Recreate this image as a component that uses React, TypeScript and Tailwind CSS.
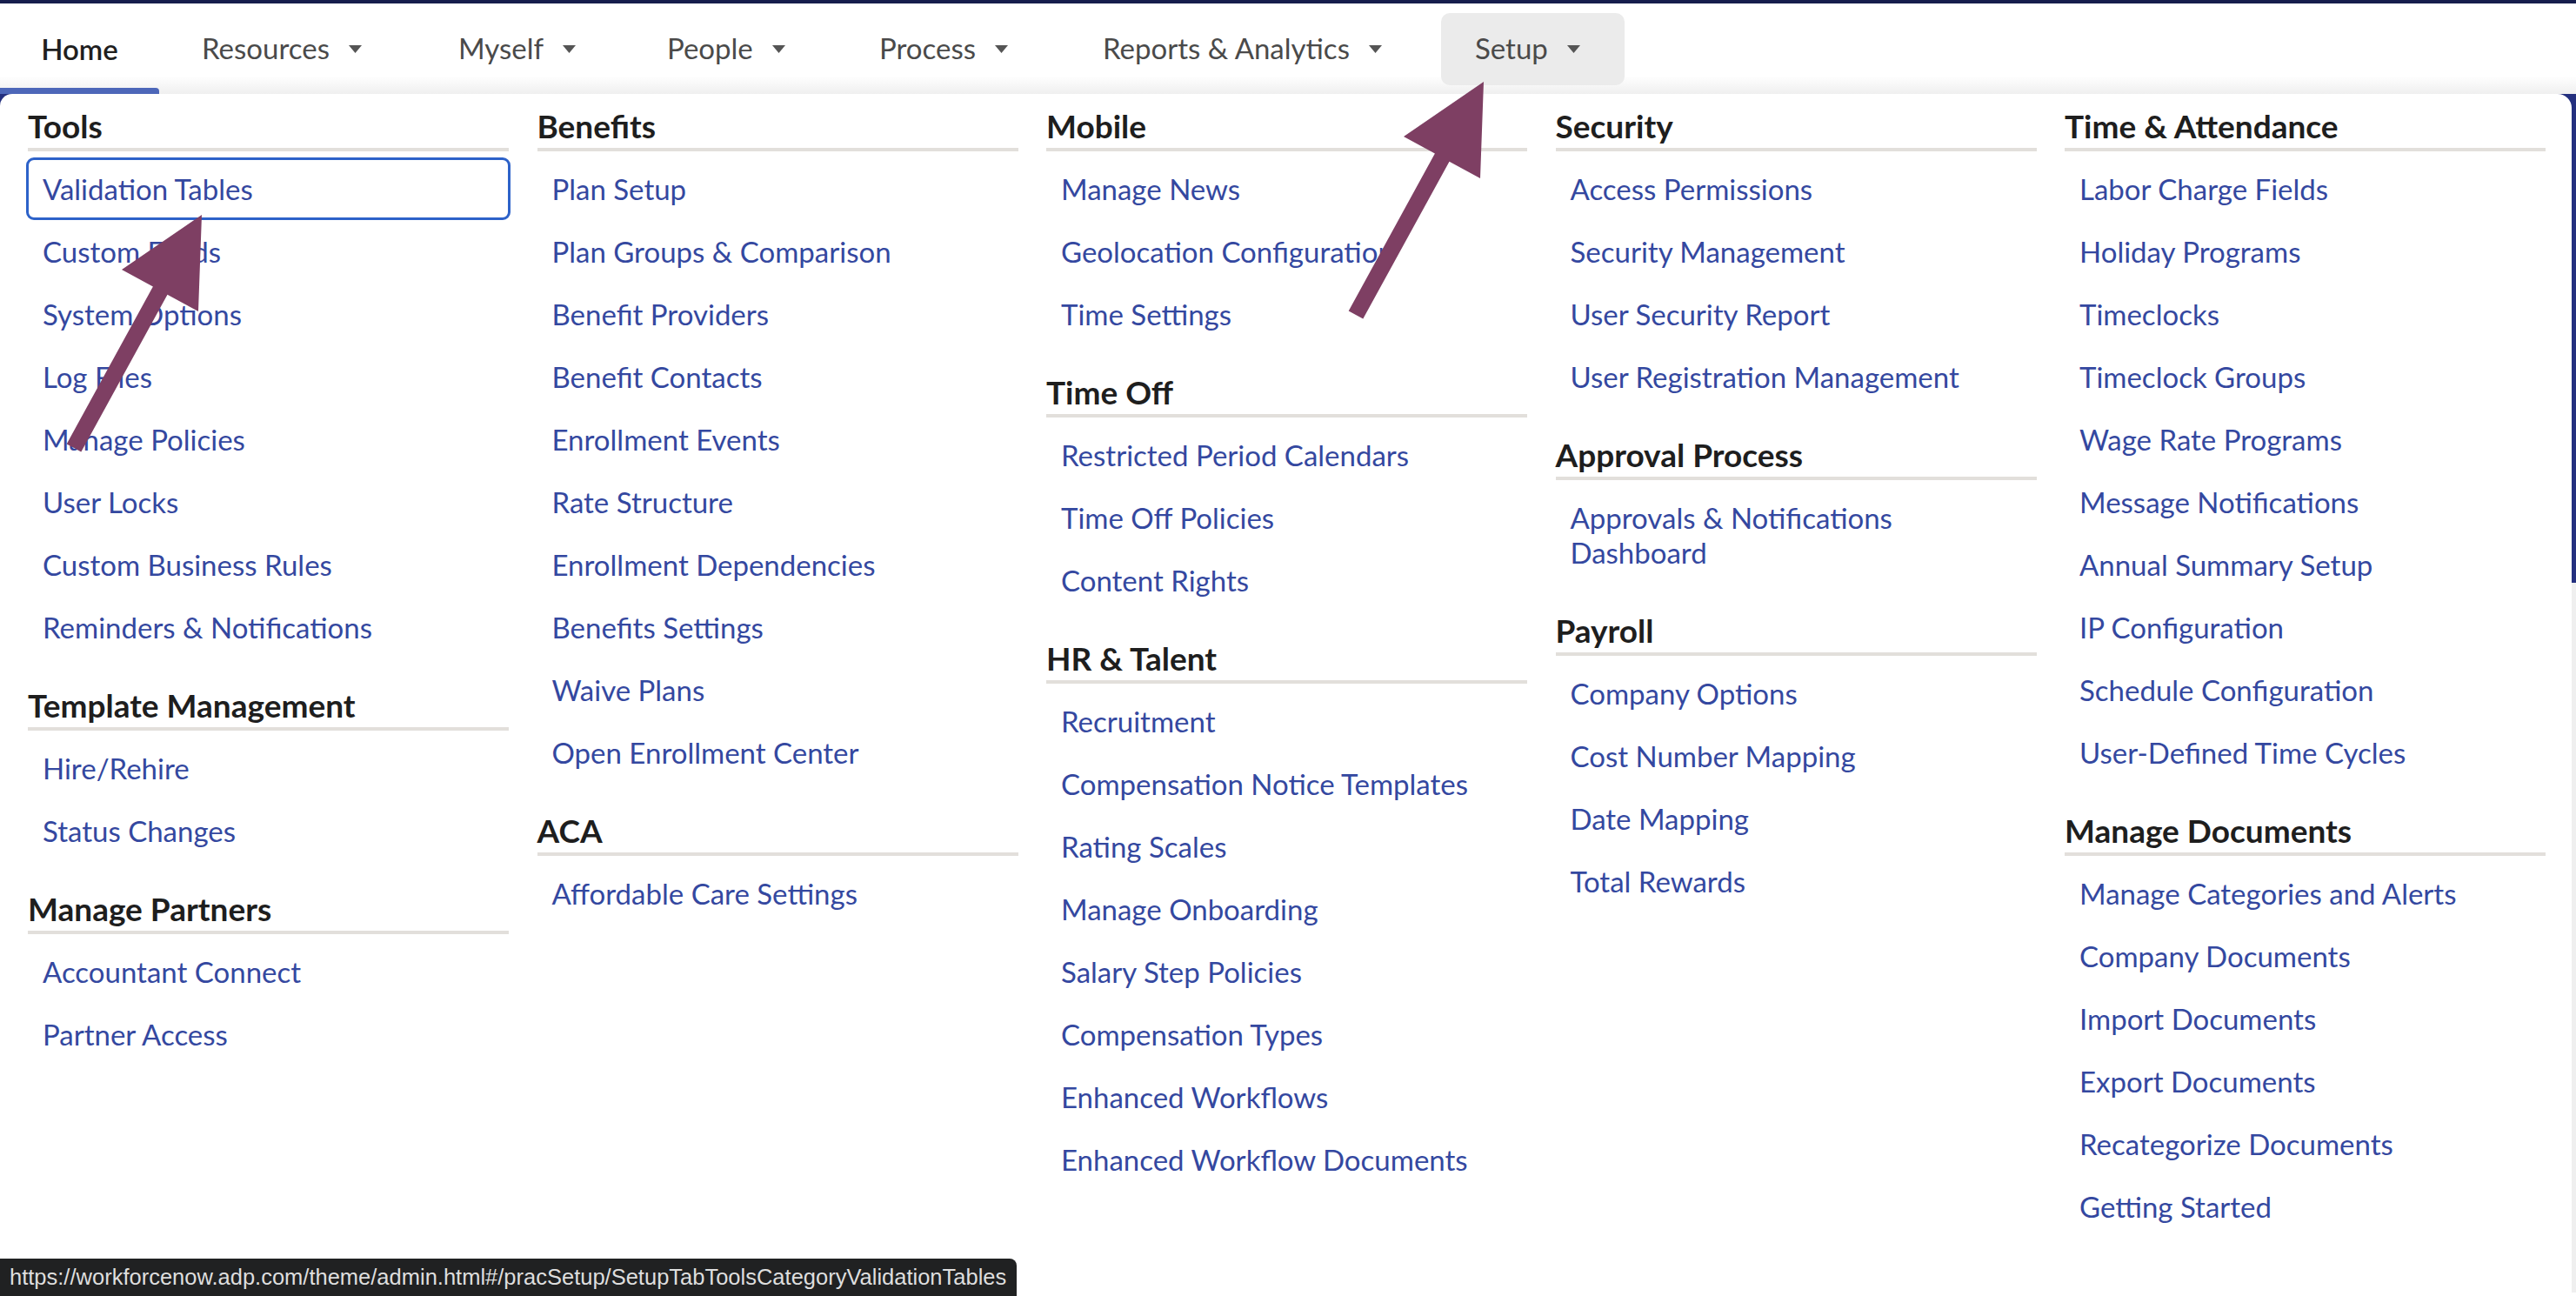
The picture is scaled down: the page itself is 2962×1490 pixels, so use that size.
import React from 'react';

type Section = { title: string; links: string[] };

const columns: Section[][] = [
  [
    {
      title: 'Tools',
      links: [
        'Validation Tables',
        'Custom Fields',
        'System Options',
        'Log Files',
        'Manage Policies',
        'User Locks',
        'Custom Business Rules',
        'Reminders & Notifications',
      ],
    },
    { title: 'Template Management', links: ['Hire/Rehire', 'Status Changes'] },
    { title: 'Manage Partners', links: ['Accountant Connect', 'Partner Access'] },
  ],
  [
    {
      title: 'Benefits',
      links: [
        'Plan Setup',
        'Plan Groups & Comparison',
        'Benefit Providers',
        'Benefit Contacts',
        'Enrollment Events',
        'Rate Structure',
        'Enrollment Dependencies',
        'Benefits Settings',
        'Waive Plans',
        'Open Enrollment Center',
      ],
    },
    { title: 'ACA', links: ['Affordable Care Settings'] },
  ],
  [
    { title: 'Mobile', links: ['Manage News', 'Geolocation Configuration', 'Time Settings'] },
    { title: 'Time Off', links: ['Restricted Period Calendars', 'Time Off Policies', 'Content Rights'] },
    {
      title: 'HR & Talent',
      links: [
        'Recruitment',
        'Compensation Notice Templates',
        'Rating Scales',
        'Manage Onboarding',
        'Salary Step Policies',
        'Compensation Types',
        'Enhanced Workflows',
        'Enhanced Workflow Documents',
      ],
    },
  ],
  [
    {
      title: 'Security',
      links: ['Access Permissions', 'Security Management', 'User Security Report', 'User Registration Management'],
    },
    { title: 'Approval Process', links: ['Approvals & Notifications\nDashboard'] },
    { title: 'Payroll', links: ['Company Options', 'Cost Number Mapping', 'Date Mapping', 'Total Rewards'] },
  ],
  [
    {
      title: 'Time & Attendance',
      links: [
        'Labor Charge Fields',
        'Holiday Programs',
        'Timeclocks',
        'Timeclock Groups',
        'Wage Rate Programs',
        'Message Notifications',
        'Annual Summary Setup',
        'IP Configuration',
        'Schedule Configuration',
        'User-Defined Time Cycles',
      ],
    },
    {
      title: 'Manage Documents',
      links: [
        'Manage Categories and Alerts',
        'Company Documents',
        'Import Documents',
        'Export Documents',
        'Recategorize Documents',
        'Getting Started',
      ],
    },
  ],
];

const tabs = [
  { label: 'Resources', className: 'ml-[10px] w-[295px]' },
  { label: 'Myself', className: 'w-[240px]' },
  { label: 'People', className: 'w-[244px]' },
  { label: 'Process', className: 'w-[257px]' },
  { label: 'Reports & Analytics', className: 'w-[428px]' },
];

function Caret() {
  return (
    <svg width="15" height="9" viewBox="0 0 15 9" className="ml-[22px] shrink-0">
      <path d="M0 0 L15 0 L7.5 9 Z" fill="#555555" />
    </svg>
  );
}

// same arrow shape, drawn twice
const arrowPoints =
  '76.7,510.4 175.9,329.6 140,310 232,247 228,358 192.5,338.7 93.3,519.6';

export default function App() {
  return (
    <div className="relative h-[1490px] w-[2962px] overflow-hidden bg-white font-['Lato','Liberation_Sans',sans-serif]">
      <div className="h-[4px] bg-[#161d4d]" />

      {/* Top nav */}
      <nav className="flex h-[104px] bg-[linear-gradient(to_bottom,#ffffff_80%,#efefef)] text-[33px] text-[#4a4a4a]">
        <div className="flex w-[183px] flex-col">
          <div className="flex flex-1 items-center justify-center pt-[8px] font-semibold text-[#1f1f1f]">Home</div>
          <div className="h-[7px] rounded-tr-[4px] bg-[#4d67b9]" />
        </div>
        {tabs.map((t) => (
          <div key={t.label} className={`flex items-center pl-[39px] ${t.className}`}>
            <span>{t.label}</span>
            <Caret />
          </div>
        ))}
        <div className="flex items-center">
          <div className="flex h-[83px] w-[211px] items-center rounded-[10px] bg-[#ebebeb] pl-[39px]">
            <span>Setup</span>
            <Caret />
          </div>
        </div>
      </nav>

      {/* Dropdown */}
      <div className="flex bg-[linear-gradient(to_bottom,#24307f_0,#24307f_562px,#efefef_562px)]">
        <div className="mr-[5px] flex h-[1378px] flex-1 gap-[32.5px] rounded-tl-[14px] rounded-tr-[16px] bg-white pl-[32px] pt-[2px]">
          {columns.map((col, ci) => (
            <div key={ci} className="flex w-[553px] flex-col">
              {col.map((sec, si) => (
                <div key={sec.title} className={si > 0 ? 'mt-[19px]' : ''}>
                  <h3 className="mb-[7px] border-b-4 border-[#e2dfdb] pb-[5px] pt-[15px] text-[37px] font-bold leading-[40px] text-[#1e1e1e]">
                    {sec.title}
                  </h3>
                  <ul>
                    {sec.links.map((l) => {
                      const focused = l === 'Validation Tables';
                      return (
                        <li
                          key={l}
                          className={`-mx-[2px] whitespace-pre-line rounded-[9px] border-[3px] py-[13px] pl-[16px] text-[33px] leading-[40px] text-[#3448a0] ${
                            focused ? 'border-[#2d62c9]' : 'border-transparent'
                          }`}
                        >
                          {l}
                        </li>
                      );
                    })}
                  </ul>
                </div>
              ))}
            </div>
          ))}
        </div>
      </div>

      {/* Annotation arrows */}
      <svg className="pointer-events-none absolute left-0 top-0" width="2962" height="1490">
        <polygon points={arrowPoints} fill="#7e3f63" />
        <polygon points={arrowPoints} fill="#7e3f63" transform="translate(1474 -153)" />
      </svg>

      {/* Link preview bar */}
      <div className="absolute bottom-0 left-0 flex h-[43px] w-[1169px] items-center rounded-tr-[8px] bg-[#202122] pl-[11px] font-['Liberation_Sans',sans-serif] text-[25.5px] text-[#dedede]">
        https://workforcenow.adp.com/theme/admin.html#/pracSetup/SetupTabToolsCategoryValidationTables
      </div>
    </div>
  );
}
